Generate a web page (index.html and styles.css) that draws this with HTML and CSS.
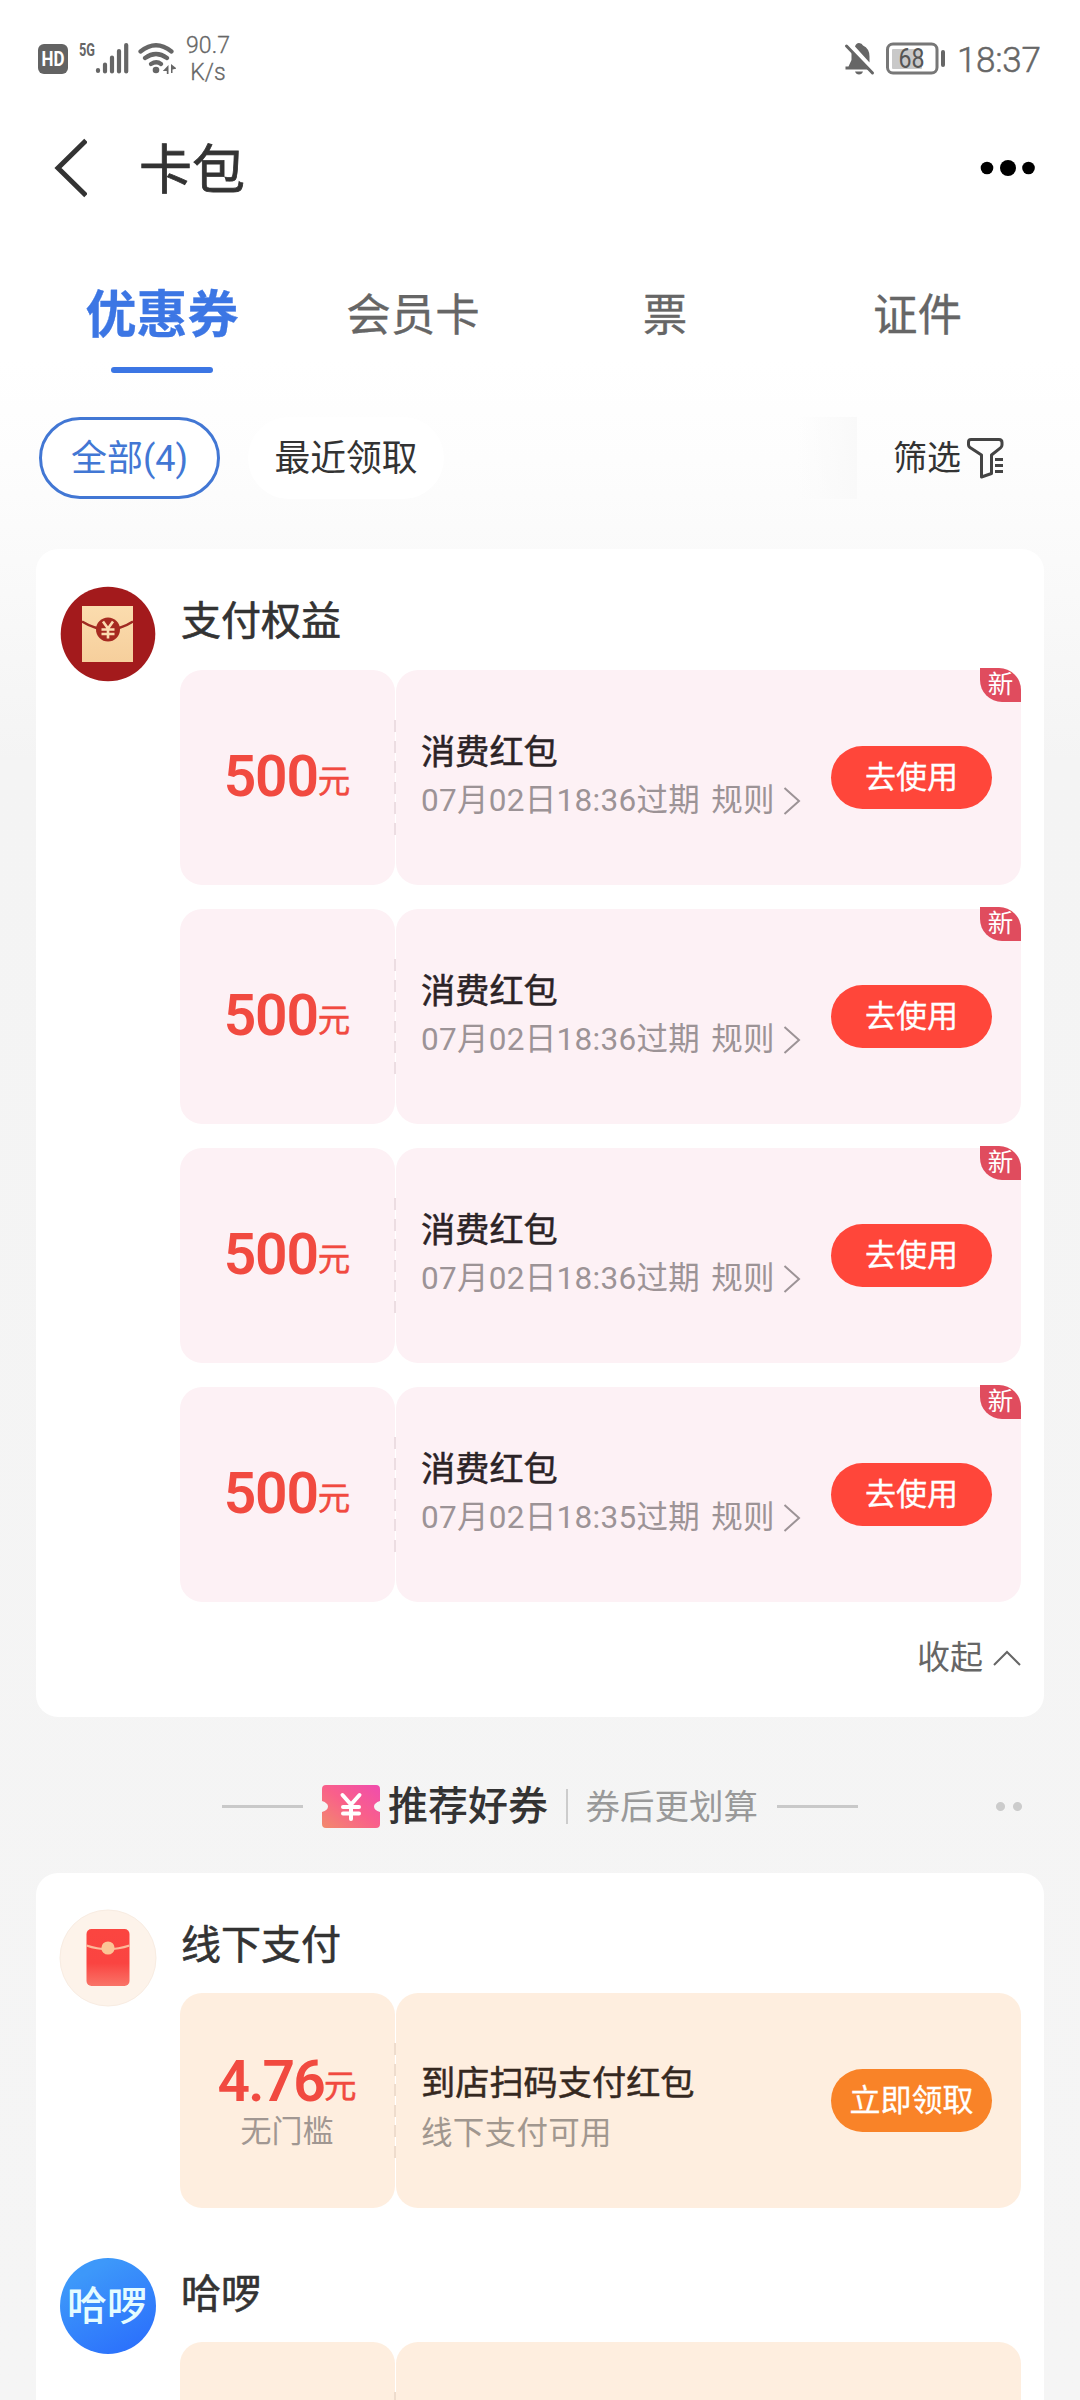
FILE: index.html
```html
<!DOCTYPE html>
<html lang="zh-CN">
<head>
<meta charset="utf-8">
<title>卡包</title>
<link rel="stylesheet" href="styles.css">
</head>
<body>
<svg width="0" height="0" class="defs">
  <defs>
    <linearGradient id="ticketFill" x1="0" y1="1" x2="1" y2="0">
      <stop offset="0" stop-color="#f28a6c"/><stop offset=".5" stop-color="#f9608a"/><stop offset="1" stop-color="#f04cae"/>
    </linearGradient>
    <linearGradient id="redFill" x1="0" y1="0" x2="0" y2="1">
      <stop offset="0" stop-color="#fb4540"/><stop offset=".6" stop-color="#fa4441"/><stop offset="1" stop-color="#f97468"/>
    </linearGradient>
    <linearGradient id="creamFill" x1="0" y1="0" x2="0" y2="1">
      <stop offset="0" stop-color="#fbdcae"/><stop offset="1" stop-color="#f6cf9c"/>
    </linearGradient>
  </defs>
</svg>
<main class="screen">
  <div class="status">
    <svg class="status-icons" width="140" height="40" viewBox="36 40 140 40">
      <rect x="38" y="44" width="30" height="30" rx="6" fill="#636363"/>
      <text x="53" y="66" text-anchor="middle" textLength="23" lengthAdjust="spacingAndGlyphs" class="hd">HD</text>
      <text x="79" y="56" textLength="16" lengthAdjust="spacingAndGlyphs" class="fiveg">5G</text>
      <g stroke="#666" stroke-width="4.2" stroke-linecap="round">
        <path d="M98 70v1M105 64.500v7M112 57.500v14M119 51v20.500M126.200 45v26.500"/>
      </g>
      <g fill="none" stroke="#666" stroke-width="4.200" stroke-linecap="round">
        <path d="M140.500 51.500q15.500-12.500 31 0M145 58q11-8 22 0M151 64q5.500-3.500 10 0"/>
      </g>
      <circle cx="156" cy="70" r="3.300" fill="#666"/>
      <path d="M168.500 65v9h-1.700v-3h-4zM171 64v9h1.500v-3.500l4-1z" fill="#666"/>
    </svg>
    <div class="speed"><span>90.7</span><span>K/s</span></div>
    <svg class="status-right" width="104" height="40" viewBox="843 40 104 40">
      <path d="M851.500 51v9l-3 6.500h-3v3h24z" fill="#666"/>
      <path d="M855 46.500q1-3.500 4-3.500t4 2.500q6.500 3 6.500 11v6z" fill="#666"/>
      <path d="M855 71.500h8q-1 3-4 3t-4-3z" fill="#666"/>
      <path d="M846.500 46l26 27" stroke="#666" stroke-width="3" stroke-linecap="round"/>
      <rect x="887.500" y="44" width="49.500" height="29" rx="5.500" fill="none" stroke="#777" stroke-width="3"/>
      <rect x="892" y="49" width="30" height="20" rx="1" fill="#c9c9c9"/>
      <rect x="941" y="50" width="4" height="17" rx="2" fill="#666"/>
      <text x="911.500" y="68" text-anchor="middle" textLength="26" lengthAdjust="spacingAndGlyphs" class="bat">68</text>
    </svg>
    <span class="time">18:37</span>
  </div>

  <header class="nav">
    <svg width="34" height="60" viewBox="0 0 34 60"><path d="M33 2.500L5 30l28 27.500" fill="none" stroke="#333" stroke-width="5"/></svg>
    <h1>卡包</h1>
    <svg class="more" width="56" height="18" viewBox="0 0 56 18"><circle cx="7" cy="9" r="6.300"/><circle cx="28" cy="9" r="8"/><circle cx="48.500" cy="9" r="6.300"/></svg>
  </header>

  <nav class="tabs">
    <a class="tab active">优惠券</a><a class="tab">会员卡</a><a class="tab">票</a><a class="tab">证件</a>
  </nav>

  <div class="filters">
    <span class="chip selected">全部(4)</span>
    <span class="chip">最近领取</span>
    <span class="fade"></span>
    <span class="filter">筛选
      <svg width="38" height="42" viewBox="0 0 38 42" fill="none" stroke="#444" stroke-width="3"><path d="M4 2.500h28q3 0 3 3v2.500q0 1.500-1.500 2.800L24.500 18v18.500L14.500 40V18L3 10.500Q1.500 9.300 1.500 8V5q0-2.500 2.500-2.500z" stroke-linejoin="round"/><path d="M28 22.500h8M28 28.500h8M28 34.500h8"/></svg>
    </span>
  </div>

  <section class="card owned">
    <div class="shop">
      <svg class="logo" width="96" height="96" viewBox="0 0 96 96">
        <circle cx="48" cy="48" r="47.300" fill="#a31a1c"/>
        <path d="M22 20h51v56H22z" fill="url(#creamFill)"/>
        <path d="M22 35.500q26 16 51 0" fill="none" stroke="#9f2a22" stroke-width="2.600"/>
        <circle cx="48" cy="43.500" r="12" fill="#a62a20"/>
        <path d="M43 35.500l5 7 5-7M41.500 43.500h13M41.500 48h13M48 42.500v10" fill="none" stroke="#fbdcb0" stroke-width="2.600"/>
      </svg>
      <div class="body">
        <h2>支付权益</h2>
        <div class="list">
          <article class="coupon">
            <div class="amount"><p><b>500</b>元</p></div>
            <div class="info"><i class="dash"></i><div class="desc"><h3>消费红包</h3><p>07月02日18:36过期<span class="rule">规则</span><svg width="18" height="30" viewBox="0 0 18 30"><path d="M1.500 2L16 15 1.500 28"/></svg></p></div><button>去使用</button><em>新</em></div>
          </article>
          <article class="coupon">
            <div class="amount"><p><b>500</b>元</p></div>
            <div class="info"><i class="dash"></i><div class="desc"><h3>消费红包</h3><p>07月02日18:36过期<span class="rule">规则</span><svg width="18" height="30" viewBox="0 0 18 30"><path d="M1.500 2L16 15 1.500 28"/></svg></p></div><button>去使用</button><em>新</em></div>
          </article>
          <article class="coupon">
            <div class="amount"><p><b>500</b>元</p></div>
            <div class="info"><i class="dash"></i><div class="desc"><h3>消费红包</h3><p>07月02日18:36过期<span class="rule">规则</span><svg width="18" height="30" viewBox="0 0 18 30"><path d="M1.500 2L16 15 1.500 28"/></svg></p></div><button>去使用</button><em>新</em></div>
          </article>
          <article class="coupon">
            <div class="amount"><p><b>500</b>元</p></div>
            <div class="info"><i class="dash"></i><div class="desc"><h3>消费红包</h3><p>07月02日18:35过期<span class="rule">规则</span><svg width="18" height="30" viewBox="0 0 18 30"><path d="M1.500 2L16 15 1.500 28"/></svg></p></div><button>去使用</button><em>新</em></div>
          </article>
        </div>
        <div class="collapse">收起<svg width="28" height="18" viewBox="0 0 28 18"><path d="M1 16L14 3l13 13" fill="none" stroke="#666" stroke-width="2"/></svg></div>
      </div>
    </div>
  </section>

  <div class="divider">
    <i class="line"></i>
    <svg class="ticket" width="58" height="43" viewBox="0 0 58 43"><path d="M4 0h50q4 0 4 4v12q-6 2-6 5.500t6 5.500v12q0 4-4 4H4q-4 0-4-4V27q6-2 6-5.500T0 16V4q0-4 4-4z" fill="url(#ticketFill)"/><path d="M20.500 10l8.500 9.500L37.500 10M21 22h16M21 28.500h16M29 20v14" fill="none" stroke="#fff" stroke-width="4" stroke-linecap="round"/></svg>
    <strong>推荐好券</strong><i class="bar"></i><span>券后更划算</span>
    <i class="line right"></i>
    <i class="dots"></i>
  </div>

  <section class="card offers">
    <div class="shop">
      <svg class="logo" width="98" height="98" viewBox="0 0 98 98">
        <circle cx="49" cy="49" r="48" fill="#fdf3ea" stroke="#f8ece2"/>
        <rect x="27.500" y="20" width="43" height="57" rx="5" fill="url(#redFill)"/>
        <path d="M27.500 36.500q21 7.500 43 0" fill="none" stroke="#fcb99a" stroke-width="2.200"/>
        <circle cx="49" cy="39" r="6.600" fill="#fbc596"/>
      </svg>
      <div class="body">
        <h2>线下支付</h2>
        <article class="coupon warm">
          <div class="amount"><p><b>4.76</b>元</p><small>无门槛</small></div>
          <div class="info"><i class="dash"></i><div class="desc"><h3>到店扫码支付红包</h3><p>线下支付可用</p></div><button>立即领取</button></div>
        </article>
      </div>
    </div>
    <div class="shop second">
      <div class="hello">哈啰</div>
      <div class="body">
        <h2>哈啰</h2>
        <article class="coupon warm">
          <div class="amount"></div>
          <div class="info"><i class="dash"></i></div>
        </article>
      </div>
    </div>
  </section>
</main>
</body>
</html>
```
FILE: styles.css
```css
* { box-sizing: border-box; margin: 0; padding: 0; }
body { font-family: Roboto, "Noto Sans CJK SC", sans-serif; color: #333; }
i, em { font-style: normal; }
.defs { display: block; height: 0; }
.screen {
  width: 1080px; height: 2400px; overflow: hidden;
  display: flex; flex-direction: column;
  background: linear-gradient(#fff 360px, #fdfdfd 460px, #fafafa 560px, #f4f4f4 760px, #f5f5f5);
}

.status { height: 110px; display: flex; padding: 0 38px 0 36px; align-items: flex-start; color: #666; flex: none; }
.status-icons { margin-top: 40px; }
.hd { font: 700 20px Roboto, sans-serif; fill: #fff; }
.fiveg { font: 700 18px Roboto, sans-serif; fill: #666; }
.bat { font: 400 27px Roboto, sans-serif; fill: #555; }
.speed { display: flex; flex-direction: column; align-items: center; width: 60px; margin: 32px 0 0 2px; font-size: 23px; line-height: 27px; font-weight: 300; -webkit-text-stroke: .3px; }
.status-right { margin: 40px 0 0 auto; }
.time { font-size: 35px; line-height: 40px; margin: 41px 0 0 10px; width: 85px; letter-spacing: -.3px; font-weight: 300; -webkit-text-stroke: .5px; }

.nav { height: 116px; flex: none; display: flex; align-items: center; padding: 0 44px 0 53px; }
.nav h1 { font-size: 53px; font-weight: 400; line-height: 60px; margin-left: 52px; padding-top: 6px; -webkit-text-stroke: .8px #333; }
.more { margin-left: auto; }

.tabs { height: 191px; flex: none; display: grid; grid-template-columns: 324px 178px 326px 179px; padding-top: 50px; }
.tab { font-size: 44.500px; line-height: 80px; color: #666; display: flex; flex-direction: column; align-items: center; white-space: nowrap; -webkit-text-stroke: .3px; }
.tab.active { color: #3c76e4; font-size: 51px; font-weight: 700; }
.tab.active::after { content: ""; width: 102px; height: 6px; border-radius: 3px; background: #3c76e4; margin-top: 11px; }

.filters { height: 82px; flex: none; display: flex; padding-left: 39px; }
.chip { height: 82px; line-height: 84px; border-radius: 41px; font-size: 35.800px; width: 196px; text-align: center; background: #fff; color: #333; }
.chip.selected { width: 181px; border: 3px solid #4277d4; color: #4277d4; line-height: 78px; margin-right: 28px; font-size: 36px; }
.fade { width: 60px; margin-left: 353px; background: linear-gradient(90deg, #fff0, #f9f9f9); }
.filter { margin-left: 36px; display: flex; align-items: center; gap: 6px; font-size: 34px; line-height: 80px; }

.card { width: 1008px; margin-left: 36px; background: #fff; border-radius: 22px; flex: none; }
.owned { margin-top: 50px; height: 1168px; padding-top: 37px; }
.shop { display: flex; padding-left: 24px; }
.shop .body { width: 841px; margin-left: 24px; }
h2 { font-size: 40px; font-weight: 400; line-height: 71px; height: 84px; padding-left: 1px; -webkit-text-stroke: .6px #333; }
.list { display: flex; flex-direction: column; gap: 24px; }
.coupon { display: flex; gap: 1px; height: 215px; }
.amount { width: 215px; border-radius: 22px; background: #fdf1f5; color: #f14a40; display: flex; flex-direction: column; align-items: center; justify-content: center; }
.amount p { display: flex; align-items: baseline; font-size: 32.500px; line-height: 60px; padding: 0 1px 0 0; white-space: nowrap; -webkit-text-stroke: .5px; }
.amount b { position: relative; top: 3px; font-size: 57px; font-weight: 600; letter-spacing: -1.200px; -webkit-text-stroke: 0; }
.amount small { font-size: 31px; line-height: 36px; color: #a19792; padding-right: 1px; }
.info { flex: 1; position: relative; border-radius: 22px; background: #fdf1f5; display: flex; align-items: center; justify-content: space-between; padding: 0 29px 0 25px; }
.dash { position: absolute; left: -2px; top: 50px; width: 2px; height: 115px; background: repeating-linear-gradient(#ecdde2 0 12px, transparent 12px 20.600px); }
.desc { display: flex; flex-direction: column; padding-bottom: 3px; }
h3 { font-size: 34.200px; font-weight: 400; line-height: 50px; color: #2b2326; -webkit-text-stroke: .5px; }
.desc p { display: flex; align-items: center; font-size: 31.500px; line-height: 48px; color: #9c9396; white-space: nowrap; letter-spacing: .3px; }
.rule { margin: 0 8px 0 11px; }
.desc svg { fill: none; stroke: #9c9396; stroke-width: 2; }
button { width: 161px; height: 63px; border: 0; border-radius: 32px; background: #ff463a; color: #fff; font: 400 31px/60px Roboto, "Noto Sans CJK SC", sans-serif; white-space: nowrap; -webkit-text-stroke: .3px; }
em { position: absolute; right: 0; top: -2px; width: 41px; height: 34px; border-radius: 0 22px 0 22px; background: #e04c5e; color: #fff; font-size: 25.500px; line-height: 33px; text-align: center; }
.collapse { display: flex; justify-content: flex-end; align-items: center; gap: 10px; font-size: 33px; line-height: 50px; margin-top: 31px; color: #666; }

.divider { height: 156px; padding: 23px 0 0 222px; display: flex; align-items: center; flex: none; }
.line { width: 81px; height: 3px; background: #c9c9c9; }
.line.right { margin-left: 19px; }
.ticket { margin: 0 8px 0 19px; }
.divider strong { font-size: 40px; font-weight: 500; line-height: 60px; }
.bar { width: 1.500px; height: 35px; background: #ccc; margin: 0 18px; }
.divider span { font-size: 34.500px; line-height: 60px; color: #999; }
.dots { width: 26px; height: 9px; margin-left: 138px; background: radial-gradient(circle at 4.500px 4.500px, #ccc 4px, transparent 5px), radial-gradient(circle at 21.500px 4.500px, #ccc 4px, transparent 5px); }

.offers { height: 620px; padding-top: 36px; }
.offers .shop { padding-left: 23px; }
.offers .shop .body { margin-left: 23px; }
.offers h2 { line-height: 73px; }
.warm .amount, .warm .info { background: #feeedf; }
.warm .amount p { line-height: 54px; }
.warm .amount b { letter-spacing: -1.800px; }
.warm h3 { color: #35281f; }
.warm .desc { padding: 16px 0 0; }
.warm .desc p { color: #a1978f; line-height: 52px; }
.warm button { background: #f98328; }
.warm .dash { background: repeating-linear-gradient(#eedccd 0 12px, transparent 12px 20.600px); }
.offers .second { margin-top: 50px; }
.hello { width: 96px; height: 96px; margin: 0 1px; padding-right: 2px; border-radius: 50%; background: linear-gradient(150deg, #3d98fa 20%, #2b70fc 90%); color: #e4fcff; font-size: 40px; font-weight: 500; line-height: 98px; display: flex; justify-content: center; white-space: nowrap; }
```
